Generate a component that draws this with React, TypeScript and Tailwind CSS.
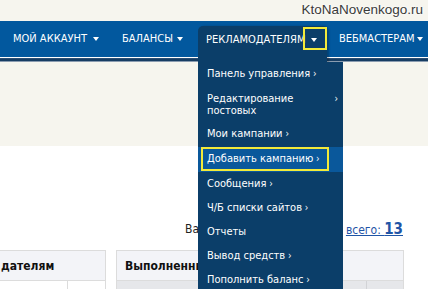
import React from "react";

const menu = [
  { t: "Панель управления", a: true, h: "h-[25px]" },
  { t: "Редактирование постовых", a: true, h: "h-[35px]", wrap: true },
  { t: "Мои кампании", a: true, h: "h-[25px]" },
  { t: "Добавить кампанию", a: true, h: "h-[25px]", hl: true },
  { t: "Сообщения", a: true, h: "h-[24px]" },
  { t: "Ч/Б списки сайтов", a: true, h: "h-[24px]" },
  { t: "Отчеты", a: false, h: "h-[24px]" },
  { t: "Вывод средств", a: true, h: "h-[24px]" },
  { t: "Пополнить баланс", a: true, h: "h-[24px]" },
];

function Caret({ cls }: { cls: string }) {
  return (
    <span
      className={`block w-0 h-0 border-l-[3px] border-r-[3px] border-t-[4px] border-l-transparent border-r-transparent border-t-white ${cls}`}
    />
  );
}

export default function App() {
  return (
    <div className="relative w-[428px] h-[289px] overflow-hidden bg-white font-['DejaVu_Sans_Condensed','DejaVu_Sans',sans-serif] text-[11px]">
      {/* top strip */}
      <div className="h-[21px] bg-[#f6f5ee] flex items-center justify-end pr-[5px]">
        <span className="font-['Liberation_Sans',sans-serif] text-[13.5px] text-[#3a3a3a] [text-shadow:0_0_3px_#fff,0_0_3px_#fff]">
          KtoNaNovenkogo.ru
        </span>
      </div>

      {/* nav */}
      <div className="relative z-10 h-[36px] bg-[#02589e] flex text-white uppercase text-[11px] whitespace-nowrap">
        <div className="w-[110px] flex items-center pl-[13px]">
          <span>Мой аккаунт</span>
          <Caret cls="ml-auto mr-[11px]" />
        </div>
        <div className="w-[88px] flex items-center pl-[12px]">
          <span>Балансы</span>
          <Caret cls="ml-auto mr-[15px]" />
        </div>
        <div className="relative w-[130px] flex items-center pl-[8px]">
          <div className="absolute left-0 right-[1px] top-[5px] bottom-[-5px] rounded-t-[5px] bg-[#0b3e69] shadow-[2px_0_2px_rgba(0,0,0,0.25)]" />
          <span className="relative pt-[2px]">Рекламодателям</span>
          <Caret cls="relative ml-auto mr-[11px] mt-[2px]" />
          <div className="absolute left-[105px] top-[6px] w-[24px] h-[23px] border-2 border-[#f2ea3a]" />

          {/* dropdown panel */}
          <div className="absolute left-0 top-[41px] w-[145px] h-[240px] bg-[#0b3e69] normal-case text-white text-[11px] whitespace-normal">
            {menu.map((m) => (
              <div
                key={m.t}
                className={`relative flex items-center pl-[9px] pr-[4px] ${m.h} ${m.hl ? "bg-[#0a589b]" : ""}`}
              >
                {m.wrap ? (
                  <div className="flex w-full items-start justify-between leading-[12px]">
                    <span className="w-[110px]">{m.t}</span>
                    <span className="text-[10px] mr-[1px]">›</span>
                  </div>
                ) : (
                  <span className="whitespace-nowrap">
                    {m.t}
                    {m.a && <span className="text-[10px]"> ›</span>}
                  </span>
                )}
                {m.hl && (
                  <div className="absolute left-[3px] top-0 w-[128px] h-[24px] border-2 border-[#f2ea3a]" />
                )}
              </div>
            ))}
          </div>
        </div>
        <div className="w-[100px] flex items-center pl-[11px]">
          <span>Вебмастерам</span>
          <Caret cls="ml-auto mr-[5px]" />
        </div>
      </div>
      <div className="h-[1px] bg-white" />
      <div className="h-[1px] bg-[#2a4f75]" />
      <div className="h-[2px] bg-[#173d63]" />
      <div className="h-[1px] bg-[#8a9cb0]" />

      {/* cream area */}
      <div className="h-[84px] bg-[#f6f5ee]" />

      {/* content */}
      <div className="pt-[74px] text-[12px]">
        <div className="h-[18px] flex items-center text-[#222]">
          <span className="pl-[185px]">Ва</span>
          <a className="ml-auto mr-[25px] text-[#1f55a6] underline">
            всего: <b className="text-[15px] font-bold">13</b>
          </a>
        </div>
        <div className="mt-[12px] flex">
          <div className="w-[106px] border-t border-r border-[#dcdcdc]">
            <div className="h-[30px] bg-[#f3f4f8] border-b border-[#dcdcdc] flex items-center pl-[1px] font-bold text-[#111]">
              дателям
            </div>
            <div className="h-[20px] flex">
              <div className="w-[68px] border-r border-[#dcdcdc]" />
            </div>
          </div>
          <div className="ml-[10px] w-[288px] border-t border-l border-r border-[#dcdcdc]">
            <div className="h-[30px] bg-[#f3f4f8] border-b border-[#dcdcdc] flex items-center pl-[8px] font-bold text-[#111]">
              <span className="block w-[74px] overflow-hidden whitespace-nowrap">Выполненные</span>
            </div>
            <div className="h-[20px] bg-[#e6e7ea] flex">
              <div className="w-[250px] border-r border-[#d2d3d6]" />
            </div>
          </div>
        </div>
      </div>
    </div>
  );
}
